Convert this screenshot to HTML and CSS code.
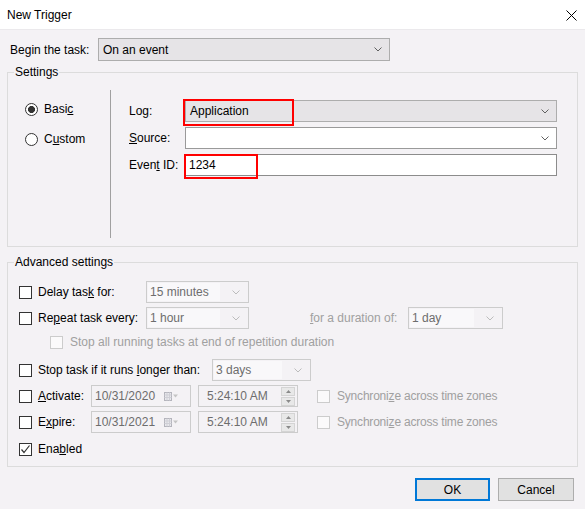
FILE: index.html
```html
<!DOCTYPE html>
<html>
<head>
<meta charset="utf-8">
<title>New Trigger</title>
<link rel="stylesheet" href="styles.css">
</head>
<body>
<div class="dialog">
  <div class="titlebar">
    <span class="title">New Trigger</span>
    <svg class="close" width="11" height="11" viewBox="0 0 11 11"><path d="M0.5 0.5 L10.5 10.5 M10.5 0.5 L0.5 10.5" stroke="#000" stroke-width="1" fill="none"/></svg>
  </div>
  <div class="main">
    <div class="begin-row">
      <span class="begin-label">Be<u>g</u>in the task:</span>
      <div class="combo combo-begin"><span>On an event</span><svg class="chev" width="8" height="5" viewBox="0 0 8 5"><polyline points="0.5,0.5 4,4 7.5,0.5" fill="none" stroke="#606060"/></svg></div>
    </div>

    <fieldset class="group settings">
      <legend>Settings</legend>
      <div class="settings-body">
        <div class="radios">
          <div class="radio-row"><span class="radio checked"></span>Basi<u>c</u></div>
          <div class="radio-row custom"><span class="radio"></span>C<u>u</u>stom</div>
        </div>
        <div class="vsep"></div>
        <div class="fields">
          <div class="field-row">
            <span class="field-label">Lo<u>g</u>:</span>
            <div class="combo combo-wide"><span>Application</span><svg class="chev" width="8" height="5" viewBox="0 0 8 5"><polyline points="0.5,0.5 4,4 7.5,0.5" fill="none" stroke="#606060"/></svg><div class="mark mark-log"></div></div>
          </div>
          <div class="field-row">
            <span class="field-label"><u>S</u>ource:</span>
            <div class="combo combo-wide combo-white"><span></span><svg class="chev" width="8" height="5" viewBox="0 0 8 5"><polyline points="0.5,0.5 4,4 7.5,0.5" fill="none" stroke="#606060"/></svg></div>
          </div>
          <div class="field-row">
            <span class="field-label">Even<u>t</u> ID:</span>
            <div class="textbox"><span>1234</span><div class="mark mark-id"></div></div>
          </div>
        </div>
      </div>
    </fieldset>

    <fieldset class="group advanced">
      <legend>Advanced settings</legend>
      <div class="adv-body">
        <div class="row r-delay">
          <span class="check"></span>
          <span class="l-delay">Delay tas<u>k</u> for:</span>
          <div class="dcombo w-delay"><span class="dtext">15 minutes</span><svg class="chev" width="8" height="5" viewBox="0 0 8 5"><polyline points="0.5,0.5 4,4 7.5,0.5" fill="none" stroke="#bcbcbc"/></svg></div>
        </div>
        <div class="row r-repeat">
          <span class="check"></span>
          <span class="l-delay">Re<u>p</u>eat task every:</span>
          <div class="dcombo w-delay"><span class="dtext">1 hour</span><svg class="chev" width="8" height="5" viewBox="0 0 8 5"><polyline points="0.5,0.5 4,4 7.5,0.5" fill="none" stroke="#bcbcbc"/></svg></div>
          <span class="l-duration gray"><u>f</u>or a duration of:</span>
          <div class="dcombo w-duration"><span class="dtext">1 day</span><svg class="chev" width="8" height="5" viewBox="0 0 8 5"><polyline points="0.5,0.5 4,4 7.5,0.5" fill="none" stroke="#bcbcbc"/></svg></div>
        </div>
        <div class="row r-stopall">
          <span class="check disabled"></span>
          <span class="gray">Stop all running tasks at end of repetition duration</span>
        </div>
        <div class="row r-stoptask">
          <span class="check"></span>
          <span class="l-stoptask">Stop task if it runs <u>l</u>onger than:</span>
          <div class="dcombo w-stoptask"><span class="dtext">3 days</span><svg class="chev" width="8" height="5" viewBox="0 0 8 5"><polyline points="0.5,0.5 4,4 7.5,0.5" fill="none" stroke="#bcbcbc"/></svg></div>
        </div>
        <div class="row r-activate">
          <span class="check"></span>
          <span class="l-activate"><u>A</u>ctivate:</span>
          <div class="date">
            <span class="dtext">10/31/2020</span>
            <svg class="cal" width="14" height="9" viewBox="0 0 14 9"><rect x="0.5" y="0.5" width="7" height="8" fill="#e8e8ec" stroke="#b4b4bc"/><path d="M0.5 3 H7.5 M0.5 5.5 H7.5 M3 0.5 V8.5 M5.5 0.5 V8.5" stroke="#cfcfd6"/><path d="M9 2.5 H14 L11.5 5.5 Z" fill="#c4c4c4"/></svg>
          </div>
          <div class="time">
            <span class="dtext">5:24:10 AM</span>
            <div class="spin"><span class="spin-btn"><svg width="5" height="3" viewBox="0 0 5 3"><path d="M0 3 H5 L2.5 0 Z" fill="#8a8a8a"/></svg></span><span class="spin-btn"><svg width="5" height="3" viewBox="0 0 5 3"><path d="M0 0 H5 L2.5 3 Z" fill="#8a8a8a"/></svg></span></div>
          </div>
          <span class="check disabled sync"></span>
          <span class="gray sync-text">Synchroni<u>z</u>e across time zones</span>
        </div>
        <div class="row r-expire">
          <span class="check"></span>
          <span class="l-activate">E<u>x</u>pire:</span>
          <div class="date">
            <span class="dtext">10/31/2021</span>
            <svg class="cal" width="14" height="9" viewBox="0 0 14 9"><rect x="0.5" y="0.5" width="7" height="8" fill="#e8e8ec" stroke="#b4b4bc"/><path d="M0.5 3 H7.5 M0.5 5.5 H7.5 M3 0.5 V8.5 M5.5 0.5 V8.5" stroke="#cfcfd6"/><path d="M9 2.5 H14 L11.5 5.5 Z" fill="#c4c4c4"/></svg>
          </div>
          <div class="time">
            <span class="dtext">5:24:10 AM</span>
            <div class="spin"><span class="spin-btn"><svg width="5" height="3" viewBox="0 0 5 3"><path d="M0 3 H5 L2.5 0 Z" fill="#8a8a8a"/></svg></span><span class="spin-btn"><svg width="5" height="3" viewBox="0 0 5 3"><path d="M0 0 H5 L2.5 3 Z" fill="#8a8a8a"/></svg></span></div>
          </div>
          <span class="check disabled sync"></span>
          <span class="gray sync-text">Synchroni<u>z</u>e across time zones</span>
        </div>
        <div class="row r-enabled">
          <span class="check checked"><svg width="11" height="11" viewBox="0 0 11 11"><polyline points="1.5,5.5 4,8.5 9.5,1.5" fill="none" stroke="#333" stroke-width="1.2"/></svg></span>
          <span>Ena<u>b</u>led</span>
        </div>
      </div>
    </fieldset>

    <div class="buttons">
      <div class="btn btn-ok">OK</div>
      <div class="btn btn-cancel">Cancel</div>
    </div>
  </div>
</div>
</body>
</html>
```

FILE: styles.css
```css
* { box-sizing: border-box; }
html, body { margin: 0; padding: 0; }
body {
  font-family: "Liberation Sans", Arial, sans-serif;
  font-size: 12px;
  color: #000;
  background: #f4f2f5;
}
u { text-decoration: underline; text-underline-offset: 1px; }

.dialog {
  width: 585px;
  height: 509px;
  overflow: hidden;
  background: #f4f2f5;
}

.titlebar {
  height: 30px;
  background: #ffffff;
  border-bottom: 1px solid #ebe9ec;
  display: flex;
  align-items: center;
  justify-content: space-between;
  padding: 1px 8px 0 7px;
}
.close { display: block; }

.main { padding: 0 7px; }

.begin-row {
  display: flex;
  align-items: center;
  margin-top: 8px;
  height: 23px;
}
.begin-label { width: 88px; margin-left: 3px; }

.combo {
  display: flex;
  align-items: center;
  justify-content: space-between;
  border: 1px solid #adadad;
  background: #e6e4e7;
  padding: 0 7px 0 4px;
  flex: none;
}
.combo-begin { width: 292px; height: 23px; }
.combo-wide { width: 372px; height: 22px; position: relative; }
.combo-white { background: #ffffff; border-color: #9a9a9a; }
.chev { display: block; flex: none; }

.group {
  margin: 3px 0 0;
  padding: 0;
  border: 1px solid #dcdcdc;
  min-width: 0;
}
.group legend {
  margin-left: 6px;
  padding: 0 1px;
  line-height: 16px;
  height: 16px;
}
.advanced { margin-top: 7px; }

.settings-body {
  height: 166px;
  display: flex;
}
.radios { width: 102px; padding-left: 17px; padding-top: 21px; }
.radio-row { display: flex; align-items: center; height: 16px; }
.radio-row.custom { margin-top: 14px; }
.radio {
  width: 13px;
  height: 13px;
  border: 1px solid #333;
  border-radius: 50%;
  background: #fff;
  margin-right: 6px;
  flex: none;
}
.radio.checked { background: radial-gradient(circle, #333 0 3.2px, #fff 3.8px); }
.vsep { width: 1px; background: #a0a0a0; margin-top: 10px; height: 148px; }

.fields { padding-left: 18px; padding-top: 20px; }
.field-row { display: flex; align-items: center; height: 22px; }
.field-row + .field-row { margin-top: 5px; }
.field-label { width: 56px; }
.textbox {
  width: 372px;
  height: 22px;
  border: 1px solid #8c8c8c;
  background: #fff;
  display: flex;
  align-items: center;
  padding-left: 3px;
  position: relative;
}
.mark { position: absolute; border: 2px solid #ff0000; }
.mark-log { left: -3px; top: -2px; width: 111px; height: 27px; }
.mark-id { left: -2px; top: -1px; width: 74px; height: 25px; }

.adv-body { height: 196px; padding: 11px 0 0 11px; }
.row { display: flex; align-items: center; height: 22px; }
.r-repeat { margin-top: 4px; }
.r-stopall { margin-top: 2px; padding-left: 31px; }
.r-stoptask { margin-top: 6px; }
.r-activate { margin-top: 4px; }
.r-expire { margin-top: 4px; }
.r-enabled { margin-top: 5px; }

.check {
  width: 13px;
  height: 13px;
  border: 1px solid #333;
  background: #fff;
  margin-right: 6px;
  flex: none;
  display: flex;
  align-items: center;
  justify-content: center;
}
.check.disabled { border-color: #cccccc; background: #fbfafb; margin-right: 7px; }
.check.sync { margin-left: 19px; }
.gray { color: #a0a0a0; }
.sync-text { letter-spacing: -0.2px; }

.l-delay { width: 108px; }
.l-duration { margin-left: 61px; width: 98px; }
.l-stoptask { width: 174px; }
.l-activate { width: 53px; }

.dcombo {
  height: 22px;
  border: 1px solid #cccccc;
  background: #f4f2f5;
  display: flex;
  align-items: center;
  justify-content: space-between;
  padding: 1px 8px 1px 1px;
  flex: none;
}
.dcombo .dtext {
  background: #f9f8fa;
  height: 18px;
  line-height: 18px;
  padding-left: 2px;
  flex: 1;
  margin-right: 12px;
}
.dtext { color: #6d6d6d; }
.w-delay { width: 103px; }
.w-duration { width: 95px; }
.w-stoptask { width: 99px; }

.date, .time {
  width: 100px;
  height: 22px;
  border: 1px solid #cccccc;
  background: #f4f2f5;
  display: flex;
  align-items: center;
  justify-content: space-between;
  flex: none;
}
.date { padding: 0 12px 0 3px; }
.cal { display: block; }
.time { margin-left: 7px; padding: 0 2px 0 8px; }
.spin { display: flex; flex-direction: column; gap: 1px; }
.spin-btn {
  width: 14px;
  height: 9px;
  background: #e8e8e8;
  border: 1px solid #d4d4d4;
  display: flex;
  align-items: center;
  justify-content: center;
}
.spin-btn svg { display: block; }

.buttons {
  display: flex;
  justify-content: flex-end;
  gap: 8px;
  margin-top: 11px;
  padding-right: 4px;
}
.btn {
  width: 75px;
  height: 23px;
  background: #e1e1e1;
  border: 1px solid #adadad;
  display: flex;
  align-items: center;
  justify-content: center;
}
.btn-ok { border: 2px solid #0078d7; }
.btn-cancel { width: 76px; }
```
